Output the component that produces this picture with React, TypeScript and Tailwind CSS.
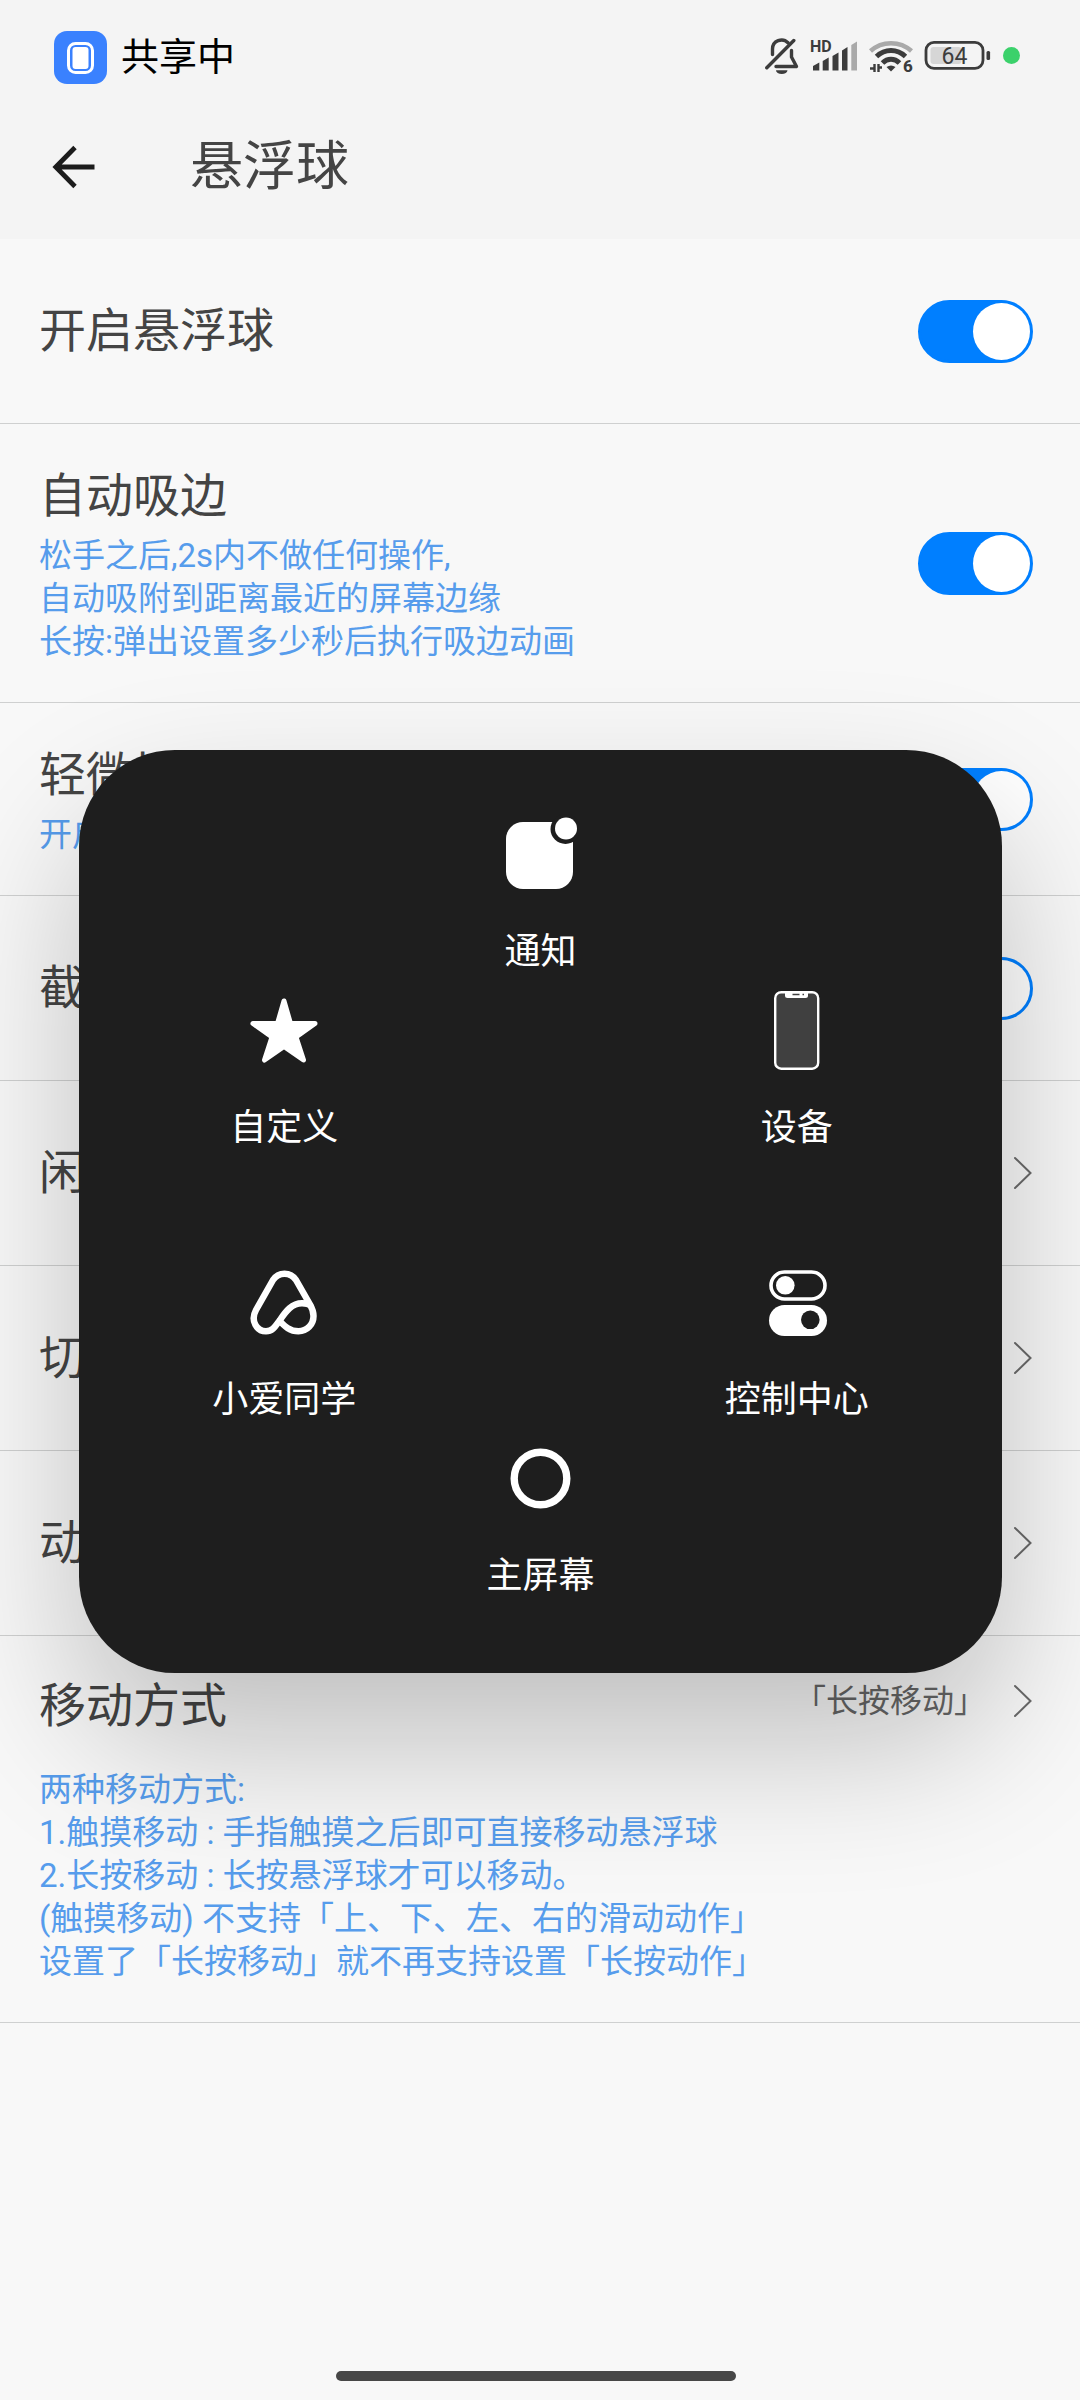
import type { ReactNode } from "react";

const settings = [
  { id: "ball", title: "开启悬浮球", lines: [], type: "switch" },
  {
    id: "edge",
    title: "自动吸边",
    lines: ["松手之后,2s内不做任何操作,", "自动吸附到距离最近的屏幕边缘", "长按:弹出设置多少秒后执行吸边动画"],
    type: "switch",
  },
  { id: "vibrate", title: "轻微振动", lines: ["开启后操作时振动"], type: "switch" },
  { id: "screenshot", title: "截屏隐藏", lines: [], type: "switch" },
  { id: "idle", title: "闲置状态", lines: [], type: "link" },
  { id: "switching", title: "切换样式", lines: [], type: "link" },
  { id: "action", title: "动作设置", lines: [], type: "link" },
];

const moveLines = [
  "两种移动方式:",
  "1.触摸移动 : 手指触摸之后即可直接移动悬浮球",
  "2.长按移动 : 长按悬浮球才可以移动。",
  "(触摸移动) 不支持「上、下、左、右的滑动动作」",
  "设置了「长按移动」就不再支持设置「长按动作」",
];

function StatusBar() {
  return (
    <div className="flex h-[115px] items-center justify-between pl-[54px] pr-[60px]">
      <div className="flex items-center gap-[14px]">
        <svg width="53" height="53" viewBox="0 0 53 53">
          <rect width="53" height="53" rx="13" fill="#3a81fe" />
          <rect x="14.5" y="12.5" width="24" height="29" rx="7" fill="none" stroke="#fff" strokeWidth="3" />
          <rect x="18.5" y="16" width="16" height="22" rx="3" fill="#fff" />
        </svg>
        <span className="text-[38px] leading-[53px] text-black">共享中</span>
      </div>

      <div className="flex items-center gap-[11px]">
        {/* 静音 */}
        <svg width="34" height="40" viewBox="0 2 34 40" fill="none" stroke="#3c3c3c" strokeWidth="3.4" strokeLinecap="round" strokeLinejoin="round">
          <path d="M7.5 18.5V13a9 9 0 0 1 15.5-6.2" />
          <path d="M26.5 14.5V21l5 9.5H11" />
          <path d="M1.8 31.8L28.8 4.5" />
          <path d="M11 34.3h11.5a5.7 3.7 0 0 1-11.5 0z" fill="#3c3c3c" stroke="none" />
        </svg>
        {/* 信号 */}
        <svg width="48" height="40" viewBox="0 2 48 40" fill="#3c3c3c">
          <text x="0" y="16" fontSize="16" fontWeight="700">HD</text>
          <path d="M3 34.5V30l6.3-3.5v8z" />
          <path d="M12.7 34.5V25l6-3.5v13z" />
          <path d="M22.5 34.5V20l6-3.5v18z" />
          <path d="M32 34.5V14.5l5.5-3.500v23.5z" />
          <path d="M41.3 34.5V9l5.7-3.500v29z" fill="#a9a9a9" />
        </svg>
        {/* WiFi 6 */}
        <svg width="44" height="40" viewBox="0 2 44 40" fill="none" stroke="#3c3c3c">
          <path d="M1.500 15C13 4.500 31 4.500 42.500 15" stroke="#a9a9a9" strokeWidth="4.5" />
          <path d="M7.500 20.500C16 12.500 28 12.500 36.500 20.500" strokeWidth="5" />
          <path d="M13.500 27C18.500 22 25.500 22 30.500 27" strokeWidth="5" />
          <path d="M17.500 31c3-2 6-2 9 0L22 35.500z" fill="#3c3c3c" stroke="none" />
          <path d="M5.500 28v8M1 32.500h4.500M9.500 28v8M9.500 31.500H13" strokeWidth="2.4" />
          <text x="34" y="36" fontSize="17" fontWeight="800" fill="#3c3c3c" stroke="none">6</text>
        </svg>
        {/* 电量 */}
        <svg width="68" height="40" viewBox="0 2 68 40">
          <rect x="6.5" y="11" width="31" height="17" rx="3" fill="#d6d6d6" />
          <rect x="2" y="6.3" width="57" height="26" rx="8" fill="none" stroke="#3c3c3c" strokeWidth="2.8" />
          <rect x="62.5" y="15" width="3.6" height="9" rx="1.5" fill="#3c3c3c" />
          <text x="30.5" y="27.7" fontSize="23" textAnchor="middle" fill="#3c3c3c">64</text>
        </svg>
        <svg width="17" height="40" viewBox="0 2 17 40">
          <circle cx="8.5" cy="19.5" r="8.5" fill="#3bd16b" />
        </svg>
      </div>
    </div>
  );
}

function Chevron() {
  return (
    <svg width="19" height="34" viewBox="0 0 19 34" fill="none" stroke="#6a6a6a" strokeWidth="2" strokeLinecap="round">
      <path d="M1 2L16.5 17L1 32" />
    </svg>
  );
}

function SubText({ lines }: { lines: string[] }) {
  return (
    <div className="text-[33px] leading-[43px] text-[#569cec]">
      {lines.map((line) => (
        <p key={line}>{line}</p>
      ))}
    </div>
  );
}

function MenuItem({ label, children }: { label: string; children: ReactNode }) {
  return (
    <button type="button" className="flex flex-col items-center gap-8">
      <svg width="80" height="80" viewBox="0 0 80 80" fill="none">
        {children}
      </svg>
      <span className="text-[36px] leading-[52px] whitespace-nowrap text-white">{label}</span>
    </button>
  );
}

function FloatMenu() {
  return (
    <div className="absolute inset-0 flex items-center justify-center pt-[23px] pr-[78px] pl-[79px]">
      <div
        role="dialog"
        aria-label="悬浮球"
        className="grid aspect-square w-full max-w-[923px] grid-cols-3 rounded-[96px] bg-[#1e1e1e] pt-16 pr-[77px] pb-[71px] pl-[77px] shadow-[0_70px_150px_rgba(0,0,0,0.23)]"
      >
        <div className="flex flex-col items-center justify-between py-44">
          <MenuItem label="自定义">
            <path
              d="M40 11L46.5 33.5H71L52 47L59.5 70L40 56.5L20.5 70L28 47L9 33.5H33.5Z"
              fill="#fff"
              stroke="#fff"
              strokeWidth="5"
              strokeLinejoin="round"
            />
          </MenuItem>
          <MenuItem label="小爱同学">
            <path
              d="M35 58C41 65 46 69.3 54.5 69.3C63 69.3 69.5 62.5 69.5 54C69.5 49 68 46 66 42.5L52 18C46.5 9.5 34.5 9.5 29 18L12 48C6 59 13 69.3 22 69.3C29 69.3 31.5 64 36 58C42 49 48 41.3 58 41.3C62 41.3 65 42 67.5 44.5"
              stroke="#fff"
              strokeWidth="6.5"
              strokeLinejoin="round"
            />
          </MenuItem>
        </div>

        <div className="flex flex-col items-center justify-between">
          <MenuItem label="通知">
            <rect x="6" y="8" width="67" height="67" rx="17" fill="#fff" />
            <circle cx="65.5" cy="15" r="15" fill="#1e1e1e" />
            <circle cx="66" cy="14.5" r="11" fill="#fff" />
          </MenuItem>
          <MenuItem label="主屏幕">
            <circle cx="40.5" cy="40.5" r="26.3" stroke="#fff" strokeWidth="7.4" />
          </MenuItem>
        </div>

        <div className="flex flex-col items-center justify-between py-44">
          <MenuItem label="设备">
            <rect x="18.2" y="2.2" width="43" height="76.5" rx="6" fill="#404040" stroke="#fff" strokeWidth="2.4" />
            <path d="M28 1.5h23v4a2.5 2.5 0 0 1-2.5 2.5h-18a2.5 2.5 0 0 1-2.5-2.5z" fill="#fff" />
            <path d="M35.5 4.5h7M45.5 4.5h1.5" stroke="#404040" strokeWidth="1.4" />
          </MenuItem>
          <MenuItem label="控制中心">
            <rect x="14" y="10" width="54" height="27" rx="13.5" stroke="#fff" strokeWidth="3.6" />
            <circle cx="28.3" cy="23.3" r="9.3" fill="#fff" />
            <rect x="12" y="43" width="58" height="31" rx="15.5" fill="#fff" />
            <circle cx="53.3" cy="57.8" r="9.3" fill="#1e1e1e" />
          </MenuItem>
        </div>
      </div>
    </div>
  );
}

export default function App() {
  return (
    <div
      lang="zh-CN"
      className="relative flex min-h-screen flex-col overflow-hidden bg-[#f8f8f8] font-['Roboto','Noto_Sans_CJK_SC',sans-serif] text-[#444444]"
    >
      <header className="bg-[#f4f4f4]">
        <StatusBar />
        <div className="flex h-[124px] items-center gap-[94px] pb-[21px] pl-[52px]">
          <button type="button" aria-label="返回">
            <svg width="44" height="44" viewBox="0 0 44 44" fill="none" stroke="#1c1c1c" strokeWidth="4.8">
              <path d="M42.5 22H4M23 2.5L3.8 22L23 41.5" />
            </svg>
          </button>
          <h1 className="text-[53px] leading-[72px]">悬浮球</h1>
        </div>
      </header>

      <main className="flex-1">
        {settings.map((row) => (
          <div
            key={row.id}
            className="flex min-h-[185px] items-center justify-between border-b border-[#cfd0d0] py-[39px] pr-[47px] pl-[39px]"
          >
            <div className="flex flex-col gap-[5px]">
              <label htmlFor={row.id} className="text-[47px] leading-[66px]">{row.title}</label>
              {row.lines.length > 0 && <SubText lines={row.lines} />}
            </div>
            {row.type === "switch" ? (
              <input
                id={row.id}
                type="checkbox"
                role="switch"
                defaultChecked
                className="flex h-[63px] w-[115px] shrink-0 appearance-none items-center rounded-full border-[3px] border-[#007fff] bg-[#f8f8f8] before:size-[57px] before:rounded-full before:bg-white checked:justify-end checked:bg-[#007fff]"
              />
            ) : (
              <button id={row.id} type="button">
                <Chevron />
              </button>
            )}
          </div>
        ))}

        {/* 移动方式 */}
        <div className="flex flex-col gap-[29px] border-b border-[#cfd0d0] pt-[37px] pr-[47px] pb-[39px] pl-[39px]">
          <div className="flex items-start justify-between">
            <h2 className="text-[47px] leading-[66px]">移动方式</h2>
            <button type="button" className="flex h-14 items-center gap-7 text-[32px] text-[#666666]">
              「长按移动」
              <Chevron />
            </button>
          </div>
          <SubText lines={moveLines} />
        </div>
      </main>

      <footer className="flex justify-center pr-2 pb-[19px]">
        <div className="h-[10px] w-[400px] rounded-full bg-[#474747]" />
      </footer>

      <FloatMenu />
    </div>
  );
}
